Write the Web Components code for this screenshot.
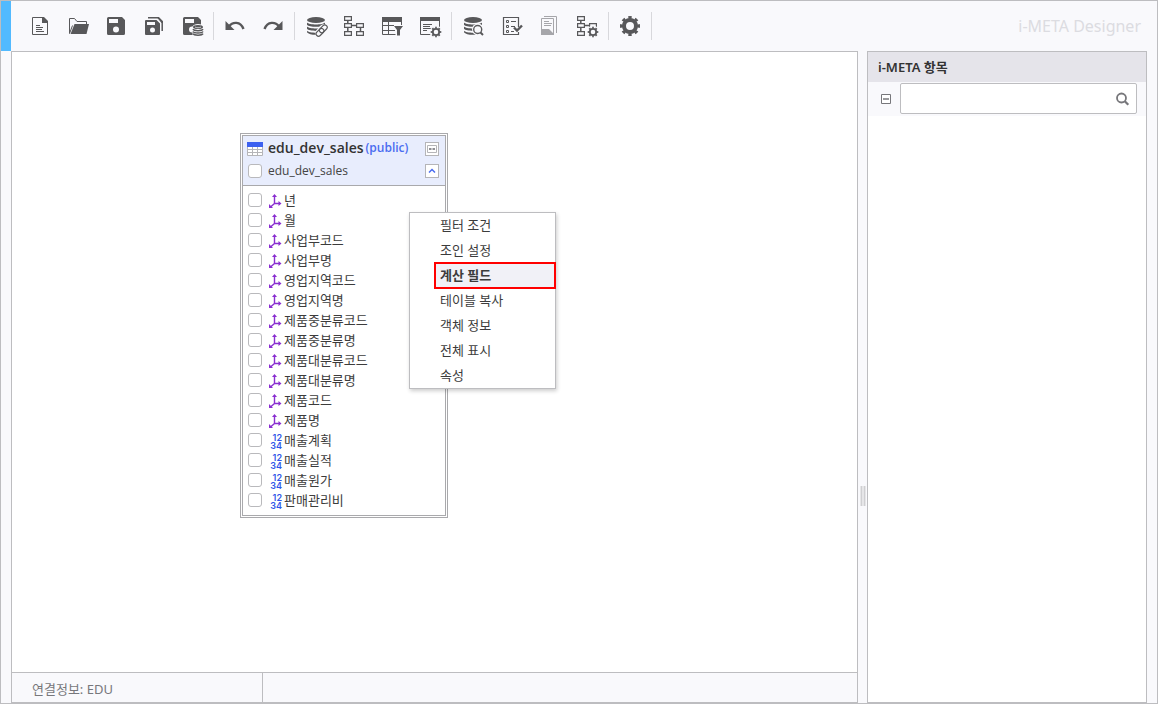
<!DOCTYPE html>
<html lang="ko">
<head>
<meta charset="utf-8">
<title>i-META Designer</title>
<style>
  :root {
    --ink: #58585a;
    --line: #bdbdc0;
    --surface: #f9f9fc;
    --accent: #52baff;
    --blue: #4a6cf0;
  }
  html, body {
    height: 100%;
    margin: 0;
  }
  body {
    font-family: "Noto Sans", "Noto Sans CJK KR", sans-serif;
    font-size: 12px;
    color: #333;
  }
</style>
</head>
<body>

<meta-app>
  <meta-toolbar slot="toolbar" heading="i-META Designer">
    <tool-button icon="file" label="새로 만들기"></tool-button>
    <tool-button icon="folder" label="열기"></tool-button>
    <tool-button icon="save" label="저장"></tool-button>
    <tool-button icon="save-all" label="다른 이름으로 저장"></tool-button>
    <tool-button icon="save-db" label="DB 저장" last></tool-button>
    <tool-button icon="undo" label="실행 취소"></tool-button>
    <tool-button icon="redo" label="다시 실행" last></tool-button>
    <tool-button icon="db-link" label="연결"></tool-button>
    <tool-button icon="tree" label="관계"></tool-button>
    <tool-button icon="table-filter" label="필터"></tool-button>
    <tool-button icon="form-gear" label="폼 설정" last></tool-button>
    <tool-button icon="db-search" label="DB 조회"></tool-button>
    <tool-button icon="checklist" label="검증"></tool-button>
    <tool-button icon="report" label="보고서"></tool-button>
    <tool-button icon="tree-gear" label="관계 설정" last></tool-button>
    <tool-button icon="gear" label="환경 설정" last></tool-button>
  </meta-toolbar>

  <design-canvas>
    <table-node>
      <span slot="name">edu_dev_sales</span>
      <span slot="schema">(public)</span>
      <span slot="alias">edu_dev_sales</span>
      <field-row>년</field-row>
      <field-row>월</field-row>
      <field-row>사업부코드</field-row>
      <field-row>사업부명</field-row>
      <field-row>영업지역코드</field-row>
      <field-row>영업지역명</field-row>
      <field-row>제품중분류코드</field-row>
      <field-row>제품중분류명</field-row>
      <field-row>제품대분류코드</field-row>
      <field-row>제품대분류명</field-row>
      <field-row>제품코드</field-row>
      <field-row>제품명</field-row>
      <field-row type="measure">매출계획</field-row>
      <field-row type="measure">매출실적</field-row>
      <field-row type="measure">매출원가</field-row>
      <field-row type="measure">판매관리비</field-row>
    </table-node>

    <context-menu>
      <menu-item>필터 조건</menu-item>
      <menu-item>조인 설정</menu-item>
      <menu-item active>계산 필드</menu-item>
      <menu-item>테이블 복사</menu-item>
      <menu-item>객체 정보</menu-item>
      <menu-item>전체 표시</menu-item>
      <menu-item>속성</menu-item>
    </context-menu>
  </design-canvas>

  <status-bar slot="status">연결정보: EDU</status-bar>
  <item-panel slot="side">i-META 항목</item-panel>
</meta-app>

<script>
// Shared icon pieces
const DB = `
  <ellipse cx="12" cy="6" rx="9" ry="3"/>
  <path d="M3 8.5c2 2.6 16 2.6 18 0v2.2c-2 2.8-16 2.8-18 0z"/>
  <path d="M3 12.6c2 2.6 16 2.6 18 0v2.2c-2 2.8-16 2.8-18 0z"/>
  <path d="M3 16.7c2 2.6 16 2.6 18 0v1.6c-2 3.4-16 3.4-18 0z"/>`;

const FLOPPY = `
  <path fill-rule="evenodd" d="M4.5 3H18l3 3v13.5a1.5 1.5 0 0 1-1.5 1.5h-15A1.5 1.5 0 0 1 3 19.5v-15A1.5 1.5 0 0 1 4.5 3zM5 5v4h9V5zM12 12.5a3 3 0 1 0 0 6 3 3 0 0 0 0-6z"/>`;

const SMALL_GEAR = `
  <circle cx="18" cy="18" r="6.5" fill="var(--surface)"/>
  <circle cx="18" cy="18" r="3.2" fill="none" stroke="currentColor" stroke-width="1.8"/>
  <circle cx="18" cy="18" r="4.5" fill="none" stroke="currentColor" stroke-width="1.6" pathLength="16" stroke-dasharray="1 1" stroke-dashoffset=".5"/>`;

const ICONS = {
  'file': `
    <path fill="none" stroke="currentColor" d="M4.5 3.5h11l4 4v13h-15z"/>
    <path d="M14 3h2l4 4v2h-6zM8 11h4v1H8zM8 13h7v1H8zM8 15h6v1H8zM8 17h8v1H8z"/>`,
  'folder': `
    <path fill="none" stroke="currentColor" d="M3.5 19.5v-15h5l2.5 3h9.5v3M3.5 19.5l3-8"/>
    <path d="M8.5 10H23l-2.5 10H4.5z"/>`,
  'save': FLOPPY,
  'save-all': `
    <path fill-rule="evenodd" d="M4 6h10.5L18 9.5V20a1 1 0 0 1-1 1H4a1 1 0 0 1-1-1V7a1 1 0 0 1 1-1zM5 8v3h8V8zM10.5 13.5a2.5 2.5 0 1 0 0 5 2.5 2.5 0 0 0 0-5z"/>
    <path fill="none" stroke="currentColor" stroke-width="1.5" d="M6 3.8h10.5l3.7 3.7V17"/>
    <path d="M15 3.5h2l4 4V9h-1.5z"/>`,
  'save-db': `${FLOPPY}
    <path fill="var(--surface)" d="M12.5 12.5q1-2.500 5.500-2.500t6 3V23H15q-3-1-2.500-4z"/>
    <ellipse cx="18" cy="13" rx="5" ry="2"/>
    <path fill="none" stroke="currentColor" stroke-width="1.5" d="M13 15.2c1 2 9 2 10 0M13 17.5c1 2 9 2 10 0M13 19.7c1 2 9 2 10 0"/>
    <path fill="none" stroke="var(--surface)" stroke-width=".7" d="M15 13c1 1 5 1 6 0"/>`,
  'undo': `
    <path d="M2.5 7v9h9z"/>
    <path fill="none" stroke="currentColor" stroke-width="2.4" d="M6 12.5c3.5-5 11.5-5.5 14.500 2.5"/>`,
  'redo': `
    <path d="M21.5 7v9h-9z"/>
    <path fill="none" stroke="currentColor" stroke-width="2.4" d="M18 12.5c-3.5-5-11.5-5.5-14.500 2.5"/>`,
  'db-link': `${DB}
    <path stroke="var(--surface)" stroke-width="8.5" stroke-linecap="round" d="M15.500 19l4-4.500"/>
    <g fill="none" stroke="currentColor" stroke-width="1.2">
      <rect x="-4.5" y="-2.4" width="9" height="4.8" rx="2.4" transform="translate(16 18.300) rotate(-45)"/>
      <rect x="-4.5" y="-2.4" width="9" height="4.8" rx="2.4" transform="translate(19.300 14.800) rotate(-45)"/>
    </g>`,
  'tree': `
    <g fill="none" stroke="currentColor">
      <path stroke-width="1.5" d="M5.8 7v10M9 11.5h6M18.5 14v3"/>
      <path fill="var(--surface)" stroke-width="1.2" d="M2.6 2.6h6.8v3.8H2.6zM2.6 9.6h6.8v3.8H2.6zM2.6 17.6h6.8v3.8H2.6zM14.6 9.6h6.8v3.8h-6.8zM14.6 17.6h6.8v3.8h-6.8z"/>
    </g>`,
  'table-filter': `
    <path d="M2 3h20v5H2z"/>
    <path fill="none" stroke="currentColor" d="M2.5 8v12.5h13M8.5 8v12.500M2 11.5h12M2 16.5h13M21.5 8v3"/>
    <path d="M14 12h9l-3 4v5.500h-3V16z"/>`,
  'form-gear': `
    <path d="M2 3h20v4H2z"/>
    <path fill="none" stroke="currentColor" d="M2.5 7v13.5h11M21.5 7v6M5 10.5h9M5 12.5h7M5 14.5h8M5 16.5h4"/>
    ${SMALL_GEAR}`,
  'db-search': `${DB}
    <circle cx="17" cy="15.5" r="6" fill="var(--surface)"/>
    <circle cx="16.7" cy="15.5" r="4" fill="var(--surface)" stroke="currentColor" stroke-width="1.4"/>
    <path fill="none" stroke="currentColor" stroke-width="2" d="M19.5 18.500l2.500 2.500"/>`,
  'checklist': `
    <g fill="none" stroke="currentColor">
      <path stroke-width="1.2" d="M19.5 13V3.5h-15v17h15V18"/>
      <path d="M7.5 6.5h2v2h-2zM7.5 11.5h2v2h-2zM7.5 16.5h2v2h-2zM12 7.5h5M12 12.5h4M12 17.5h3"/>
      <path stroke-width="2.4" d="M15 13.500l3 3 5-5"/>
    </g>`,
  'report': `
    <g color="#a6a6aa">
      <path fill="none" stroke="currentColor" d="M7 2.5h12.500V19M4.5 4.5h12v16h-12z"/>
      <path fill="currentColor" d="M7 7h5v1H7zM7 9h8v1H7zM7 11h7v1H7zM4 15h8l5 5v1H4z"/>
    </g>`,
  'tree-gear': `
    <g fill="none" stroke="currentColor">
      <path stroke-width="1.5" d="M5.8 7v10M9 11.5h6"/>
      <path fill="var(--surface)" stroke-width="1.2" d="M2.6 2.6h6.8v3.8H2.6zM2.6 9.6h6.8v3.8H2.6zM2.6 17.6h6.8v3.8H2.6zM14.6 9.6h6.8v3.8h-6.8z"/>
    </g>
    ${SMALL_GEAR}`,
  'gear': `
    <circle cx="12" cy="12" r="6" fill="none" stroke="currentColor" stroke-width="4"/>
    <circle cx="12" cy="12" r="8.500" fill="none" stroke="currentColor" stroke-width="3" pathLength="16" stroke-dasharray="1 1" stroke-dashoffset=".5"/>`
};

class BaseElement extends HTMLElement {
  constructor() {
    super();
    this.attachShadow({ mode: 'open' });
  }

  connectedCallback() {
    this.shadowRoot.innerHTML = this.template();
  }
}

class MetaApp extends BaseElement {
  template() {
    return `
      <style>
        :host {
          display: flex;
          flex-direction: column;
          box-sizing: border-box;
          height: 100vh;
          border: 1px solid var(--line);
          background: var(--surface);
        }
        .body {
          flex: 1;
          display: flex;
          min-height: 0;
          padding: 0 10px;
        }
        main {
          flex: 1;
          display: flex;
          flex-direction: column;
          min-width: 0;
          border: 1px solid var(--line);
        }
        .splitter {
          display: flex;
          flex-direction: column;
          align-items: center;
          width: 9px;
          cursor: col-resize;
        }
        .splitter::before { content: ""; flex: 11; }
        .splitter::after { content: ""; flex: 5; }
        .grip {
          width: 6px;
          height: 20px;
          background: repeating-linear-gradient(90deg, #e6e6e8 0 1px, #cfcfd2 1px 2px, #e6e6e8 2px 3px);
        }
      </style>
      <slot name="toolbar"></slot>
      <div class="body">
        <main>
          <slot></slot>
          <slot name="status"></slot>
        </main>
        <div class="splitter"><div class="grip"></div></div>
        <slot name="side"></slot>
      </div>
    `;
  }
}

class MetaToolbar extends BaseElement {
  template() {
    return `
      <style>
        :host {
          display: flex;
          align-items: center;
          height: 50px;
          padding: 0 16px 0 10px;
          border-left: 10px solid var(--accent);
        }
        nav { display: flex; }
        h1 {
          margin: 0 0 0 auto;
          font-size: 16px;
          line-height: 24px;
          font-weight: 400;
          color: #dcdce1;
        }
      </style>
      <nav><slot></slot></nav>
      <h1>${this.getAttribute('heading')}</h1>
    `;
  }
}

class ToolButton extends BaseElement {
  template() {
    return `
      <style>
        :host { display: flex; align-items: center; }
        :host([last])::after {
          content: "";
          width: 1px;
          height: 28px;
          margin: 0 2px;
          background: #d8d8dc;
        }
        button {
          display: flex;
          justify-content: center;
          align-items: center;
          width: 38px;
          height: 38px;
          padding: 0;
          border: 0;
          background: none;
          color: var(--ink);
          cursor: pointer;
        }
        svg { width: 24px; height: 24px; fill: currentColor; }
      </style>
      <button type="button" aria-label="${this.getAttribute('label')}">
        <svg viewBox="0 0 24 24" aria-hidden="true">${ICONS[this.getAttribute('icon')]}</svg>
      </button>
    `;
  }
}

class DesignCanvas extends BaseElement {
  template() {
    return `
      <style>
        :host {
          display: block;
          position: relative;
          flex: 1;
          min-height: 0;
          background: #fff;
        }
        /* free canvas: nodes and menus are placed by coordinates */
        ::slotted(table-node) { position: absolute; left: 228px; top: 81px; }
        ::slotted(context-menu) { position: absolute; left: 397px; top: 160px; }
      </style>
      <slot></slot>
    `;
  }
}

const CHECKBOX_CSS = `
  input[type="checkbox"] {
    appearance: none;
    flex: none;
    box-sizing: border-box;
    width: 14px;
    height: 14px;
    margin: 0;
    border: 1px solid #b9b9bc;
    border-radius: 3px;
    background: #fff;
  }
  input[type="checkbox"]:checked { background: var(--blue); }
`;

class TableNode extends BaseElement {
  template() {
    return `
      <style>
        :host {
          display: block;
          box-sizing: border-box;
          width: 208px;
          border: 3px double #a9a9ac;
          background: #fff;
          font-family: "Open Sans", "Noto Sans CJK KR", sans-serif;
        }
        header {
          padding: 2px 6px 3px 3px;
          border-bottom: 1px solid #a9a9ac;
          background: #e8edfd;
        }
        .line { display: flex; align-items: center; height: 22px; }
        .mark { display: flex; justify-content: center; width: 18px; margin-right: 4px; }
        h2 { margin: 0; padding-bottom: 2px; font-size: 14px; line-height: 20px; font-weight: 600; }
        .schema {
          margin-left: 2px;
          padding-bottom: 2px;
          font-size: 12px;
          line-height: 20px;
          font-weight: 600;
          color: var(--blue);
        }
        label { display: flex; align-items: center; color: #444; }
        .alias { padding-bottom: 2px; }
        button {
          display: flex;
          justify-content: center;
          align-items: center;
          box-sizing: border-box;
          width: 14px;
          height: 14px;
          margin-left: auto;
          padding: 0;
          border: 1px solid #b5b5b8;
          background: #fff;
        }
        .body { padding: 4px 0 5px 5px; }
        ${CHECKBOX_CSS}
      </style>
      <header>
        <div class="line">
          <span class="mark">
            <svg width="16" height="14" viewBox="0 0 16 14" aria-hidden="true">
              <path fill="#fff" stroke="#b5b5b8" d="M.5 4.5h15v9H.5zM0 7.5h16M0 10.5h16M5.5 5v9M10.5 5v9"/>
              <path fill="#3c60f0" d="M0 0h16v5H0z"/>
            </svg>
          </span>
          <h2><slot name="name"></slot></h2>
          <span class="schema"><slot name="schema"></slot></span>
          <button type="button" aria-label="표시 전환">
            <svg width="12" height="12" viewBox="0 0 12 12" aria-hidden="true">
              <path fill="none" stroke="#b5b5b8" d="M1.5 2.5h9v7h-9z"/>
              <path fill="#909094" d="M3 5h2v2H3zM5.5 5h1v2h-1zM7 5h2v2H7z"/>
            </svg>
          </button>
        </div>
        <div class="line">
          <label>
            <span class="mark"><input type="checkbox"></span>
            <span class="alias"><slot name="alias"></slot></span>
          </label>
          <button type="button" aria-label="접기">
            <svg width="8" height="6" viewBox="0 0 8 6" aria-hidden="true">
              <path fill="none" stroke="#4a6cf0" stroke-width="1.5" d="M1 4.5l3-3 3 3"/>
            </svg>
          </button>
        </div>
      </header>
      <div class="body"><slot></slot></div>
    `;
  }
}

class FieldRow extends BaseElement {
  template() {
    const measure = this.getAttribute('type') === 'measure';
    const icon = measure
      ? '<span class="icon digits" aria-hidden="true">1234</span>'
      : `<svg class="icon" viewBox="0 0 13 16" aria-hidden="true">
           <path fill="none" stroke="#8a2fd0" stroke-width="1.4" d="M5.5 3v7.5H11M5.5 10.5L1.5 14"/>
           <path fill="#8a2fd0" d="M5.5 1l2.5 3H3zM12.500 10.5L9.500 8v5zM0 15v-4l4 4z"/>
         </svg>`;

    return `
      <style>
        :host { display: block; }
        label {
          display: flex;
          align-items: center;
          height: 20px;
          font-size: 13px;
          line-height: 20px;
          color: #3c3c3c;
        }
        .icon { width: 13px; height: 16px; margin: 2px 2px 0 7px; }
        /* two digits per line */
        .digits {
          padding-top: 1px;
          font-family: Inter, sans-serif;
          font-size: 9px;
          line-height: 8px;
          font-weight: 600;
          text-align: right;
          word-break: break-all;
          color: #2f55e8;
        }
        ${CHECKBOX_CSS}
      </style>
      <label>
        <input type="checkbox">
        ${icon}
        <slot></slot>
      </label>
    `;
  }
}

class ContextMenu extends BaseElement {
  connectedCallback() {
    super.connectedCallback();
    this.setAttribute('role', 'menu');
  }

  template() {
    return `
      <style>
        :host {
          display: block;
          box-sizing: border-box;
          width: 147px;
          padding-left: 25px;
          border: 1px solid var(--line);
          background: #fff;
          box-shadow: 1px 2px 4px rgba(0, 0, 0, 0.2);
        }
      </style>
      <slot></slot>
    `;
  }
}

class MenuItem extends BaseElement {
  template() {
    return `
      <style>
        :host { display: block; }
        button {
          display: block;
          width: 100%;
          height: 25px;
          padding: 0 5px;
          border: 0;
          background: none;
          font: inherit;
          font-size: 13px;
          line-height: 25px;
          text-align: left;
          color: #3c3c3c;
        }
        :host([active]) button {
          background: #f1f1f7;
          font-weight: 700;
          outline: 2px solid #f00;
          outline-offset: -1px;
        }
      </style>
      <button type="button" role="menuitem"><slot></slot></button>
    `;
  }
}

class StatusBar extends BaseElement {
  template() {
    return `
      <style>
        :host {
          display: flex;
          height: 29px;
          border-top: 1px solid var(--line);
          background: var(--surface);
        }
        .cell {
          box-sizing: border-box;
          width: 251px;
          padding: 0 20px;
          border-right: 1px solid var(--line);
          font-size: 13px;
          line-height: 32px;
          color: #77777b;
        }
      </style>
      <div class="cell"><slot></slot></div>
    `;
  }
}

class ItemPanel extends BaseElement {
  template() {
    return `
      <style>
        :host {
          display: block;
          box-sizing: border-box;
          width: 280px;
          border: 1px solid var(--line);
          background: #fff;
        }
        h2 {
          margin: 0;
          padding: 0 10px;
          background: #e5e4ea;
          font-size: 13px;
          line-height: 30px;
          font-weight: 600;
          color: #333;
        }
        .search {
          display: flex;
          align-items: center;
          gap: 8px;
          padding: 1px 9px 2px 12px;
          background: var(--surface);
        }
        button {
          display: flex;
          padding: 0;
          border: 0;
          background: none;
          color: #77777b;
        }
        .box {
          flex: 1;
          display: flex;
          align-items: center;
          box-sizing: border-box;
          height: 31px;
          padding: 0 6px;
          border: 1px solid var(--line);
          border-radius: 2px;
          background: #fff;
        }
        input {
          flex: 1;
          min-width: 0;
          border: 0;
          outline: 0;
          background: none;
          font: inherit;
        }
      </style>
      <h2><slot></slot></h2>
      <div class="search">
        <button type="button" aria-label="모두 접기">
          <svg width="12" height="12" viewBox="0 0 12 12" aria-hidden="true">
            <path fill="#fff" stroke="currentColor" d="M1.5 1.5h9v9h-9z"/>
            <path fill="none" stroke="currentColor" stroke-width="1.5" d="M3 6h6"/>
          </svg>
        </button>
        <div class="box">
          <input type="text" aria-label="항목 검색">
          <button type="button" aria-label="검색">
            <svg width="16" height="16" viewBox="0 0 16 16" aria-hidden="true">
              <g fill="none" stroke="currentColor" stroke-width="1.8">
                <circle cx="7.500" cy="7" r="4.5"/>
                <path stroke-width="2.2" d="M10.8 10.3l3.500 3.500"/>
              </g>
            </svg>
          </button>
        </div>
      </div>
    `;
  }
}

customElements.define('meta-app', MetaApp);
customElements.define('meta-toolbar', MetaToolbar);
customElements.define('tool-button', ToolButton);
customElements.define('design-canvas', DesignCanvas);
customElements.define('table-node', TableNode);
customElements.define('field-row', FieldRow);
customElements.define('context-menu', ContextMenu);
customElements.define('menu-item', MenuItem);
customElements.define('status-bar', StatusBar);
customElements.define('item-panel', ItemPanel);
</script>
</body>
</html>
